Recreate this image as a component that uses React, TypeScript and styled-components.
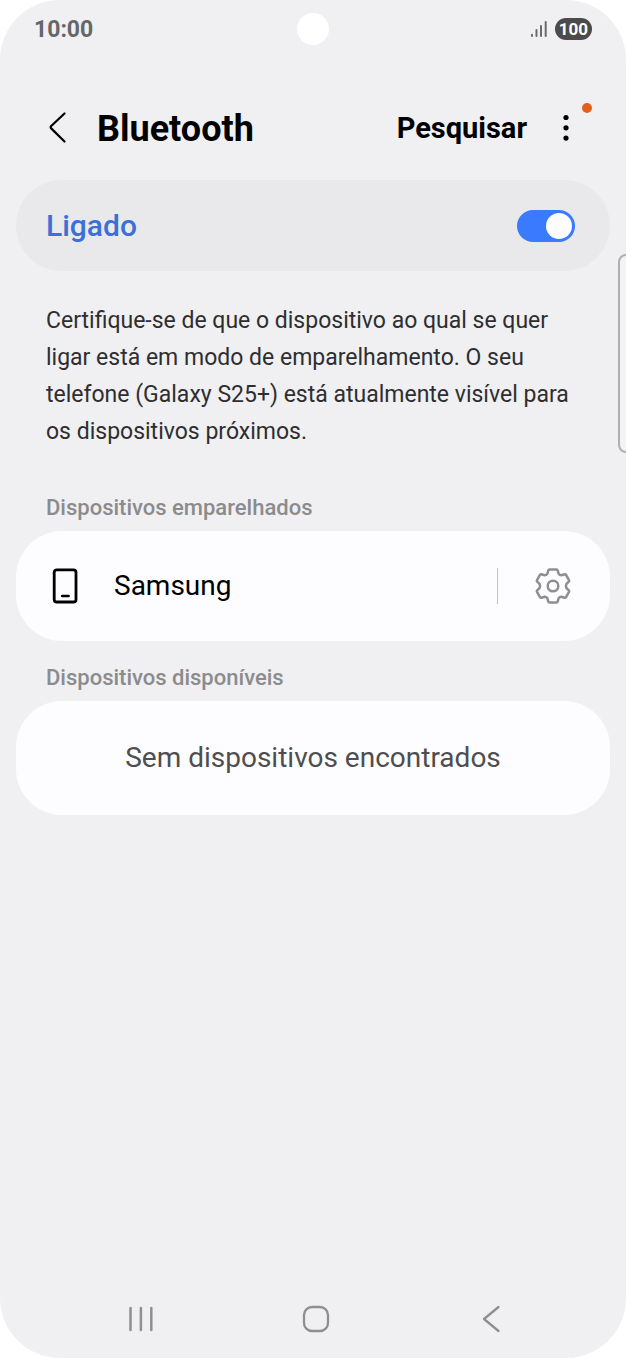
import React from "react";
import styled, { createGlobalStyle } from "styled-components";

const GlobalStyle = createGlobalStyle`
  *, *::before, *::after { box-sizing: border-box; }
  body {
    margin: 0;
    background: #ffffff;
    font-family: Roboto, "Liberation Sans", sans-serif;
  }
  button { font: inherit; color: inherit; background: none; border: 0; padding: 0; cursor: pointer; }
  p, h1, h2 { margin: 0; }
  svg { display: block; flex: none; }
`;

const Screen = styled.div`
  position: relative;
  display: flex;
  flex-direction: column;
  min-height: 100vh;
  overflow: hidden;
  border-radius: 60px;
  background: #f0f0f2;
  color: #000000;
`;

const StatusBar = styled.div`
  display: grid;
  grid-template-columns: 1fr auto 1fr;
  align-items: center;
  height: 58px;
  padding: 0 34px;
`;

const Clock = styled.time`
  padding-top: 2px;
  font-size: 23px;
  line-height: 28px;
  font-weight: 700;
  color: #666668;
`;

const Camera = styled.div`
  width: 32px;
  height: 32px;
  border-radius: 50%;
  background: #ffffff;
`;

const StatusIcons = styled.div`
  display: flex;
  justify-content: flex-end;
  align-items: center;
  gap: 8px;
`;

const Battery = styled.span`
  width: 37px;
  height: 22px;
  border-radius: 11px;
  background: #4b4b4b;
  color: #ffffff;
  font-size: 17px;
  line-height: 22px;
  font-weight: 700;
  text-align: center;
`;

const Header = styled.header`
  display: flex;
  align-items: center;
  height: 80px;
  margin-top: 30px;
  padding: 0 46px 0 44px;
`;

const IconButton = styled.button`
  display: flex;
  align-items: center;
  justify-content: center;
  position: relative;
  flex: none;
  width: 28px;
  height: 48px;
`;

const Title = styled.h1`
  flex: 1;
  padding: 2px 0 0 25px;
  font-size: 36px;
  line-height: 44px;
  font-weight: 700;
`;

const SearchButton = styled.button`
  && {
    margin-right: 25px;
    font-size: 29px;
    line-height: 44px;
    font-weight: 700;
  }
`;

const UpdateDot = styled.span`
  position: absolute;
  top: -1px;
  right: -12px;
  width: 10px;
  height: 10px;
  border-radius: 50%;
  background: #e2601c;
`;

const Content = styled.main`
  display: flex;
  flex-direction: column;
  padding: 12px 16px 0;
`;

const PowerRow = styled.label`
  display: flex;
  align-items: center;
  justify-content: space-between;
  height: 91px;
  padding: 0 35px 0 30px;
  border-radius: 46px;
  background: #e9e9eb;
  color: #3a70d8;
  font-size: 30px;
  line-height: 36px;
  font-weight: 500;
`;

const Switch = styled.input`
  appearance: none;
  display: flex;
  align-items: center;
  justify-content: flex-start;
  width: 58px;
  height: 32px;
  margin: 0;
  padding: 0 3px;
  border-radius: 16px;
  background: #9a9a9e;
  cursor: pointer;

  &::before {
    content: "";
    width: 26px;
    height: 26px;
    border-radius: 50%;
    background: #fdfdff;
  }
  &:checked { justify-content: flex-end; background: #3a7afe; }
`;

const Description = styled.p`
  padding: 31px 29px 0 30px;
  color: #2e2e30;
  font-size: 23px;
  line-height: 37px;
`;

const SectionTitle = styled.h2<{ $gap: number }>`
  margin-top: ${({ $gap }) => $gap}px;
  padding: 0 30px;
  color: #8b8b8d;
  font-size: 22px;
  line-height: 30px;
  font-weight: 500;
`;

const Card = styled.section`
  display: flex;
  align-items: center;
  min-height: 110px;
  margin-top: 8px;
  padding: 0 43px 0 36px;
  border-radius: 46px;
  background: #fdfdff;
`;

const DeviceButton = styled.button`
  && {
    display: flex;
    flex: 1;
    align-items: center;
    gap: 36px;
    font-size: 28px;
    line-height: 36px;
    text-align: left;
  }
`;

const Divider = styled.span`
  width: 1px;
  height: 36px;
  margin-right: 41px;
  background: #c4c4c6;
`;

const EmptyCard = styled(Card)`
  justify-content: center;
  min-height: 114px;
  padding: 0 36px;
  color: #4e4e50;
  font-size: 28px;
  line-height: 36px;
`;

const EdgeHandle = styled.div`
  position: absolute;
  top: 254px;
  right: -8px;
  width: 16px;
  height: 199px;
  border: 2px solid #b0b0b2;
  border-radius: 8px;
  background: #f3f3f5;
`;

const NavBar = styled.nav`
  display: flex;
  height: 78px;
  margin-top: auto;
  padding: 0 48px 0 54px;
`;

const NavButton = styled.button`
  display: flex;
  flex: 1;
  align-items: center;
  justify-content: center;
`;

export default function App() {
  const [on, setOn] = React.useState(true);
  return (
    <>
      <GlobalStyle />
      <Screen>
        <StatusBar>
          <Clock>10:00</Clock>
          <Camera />
          <StatusIcons>
            <svg width="16" height="18" viewBox="0 0 16 18" stroke="#6a6a6c" strokeWidth="2" strokeLinecap="round" aria-hidden="true">
              <path d="M1 14.8V16M5.5 10V16M10 6V16M14.7 2V16" />
            </svg>
            <Battery>100</Battery>
          </StatusIcons>
        </StatusBar>

        <Header>
          <IconButton aria-label="Voltar">
            <svg width="20" height="32" viewBox="0 0 20 32" fill="none" stroke="#000" strokeWidth="2.2" strokeLinecap="round" strokeLinejoin="round">
              <path d="M16.5 1.5L3.2 14Q2 15.2 3.2 16.4L16.5 29.5" />
            </svg>
          </IconButton>
          <Title>Bluetooth</Title>
          <SearchButton>Pesquisar</SearchButton>
          <IconButton aria-label="Mais opções">
            <svg width="6" height="28" viewBox="0 0 6 28" fill="#000">
              <circle cx="3" cy="3.5" r="2.6" />
              <circle cx="3" cy="13.8" r="2.6" />
              <circle cx="3" cy="24.1" r="2.6" />
            </svg>
            <UpdateDot />
          </IconButton>
        </Header>

        <Content>
          <PowerRow>
            Ligado
            <Switch type="checkbox" role="switch" checked={on} onChange={(e) => setOn(e.target.checked)} />
          </PowerRow>
          <Description>
            Certifique-se de que o dispositivo ao qual se quer ligar está em modo de emparelhamento. O seu telefone (Galaxy
            S25+) está atualmente visível para os dispositivos próximos.
          </Description>

          <SectionTitle $gap={43}>Dispositivos emparelhados</SectionTitle>
          <Card>
            <DeviceButton>
              <svg width="26" height="36" viewBox="0 0 26 36" fill="none" stroke="#000" strokeWidth="2.8" strokeLinecap="round" aria-hidden="true">
                <rect x="2.2" y="1.8" width="21.8" height="32.2" rx="2.6" />
                <path d="M10.2 28H16.6" strokeWidth="2.6" />
              </svg>
              Samsung
            </DeviceButton>
            <Divider />
            <IconButton aria-label="Definições do dispositivo">
              <svg width="38" height="38" viewBox="-19 -19 38 38" fill="none" stroke="#8f8f91" strokeWidth="2.5" strokeLinejoin="round">
                <path d="M-3.6 -16.5H3.6Q4.4 -16.5 4.7 -15.6L5.6 -12.2Q6.8 -10.7 8.3 -10.8L11.6 -11.8Q12.4 -12 12.9 -11.3L16.1 -5.7Q16.4 -5 15.8 -4.3L13.4 -2Q12.4 0 13.4 2L15.8 4.3Q16.4 5 16.1 5.7L12.9 11.3Q12.4 12 11.6 11.8L8.3 10.8Q6.8 10.7 5.6 12.2L4.7 15.6Q4.4 16.5 3.6 16.5H-3.6Q-4.4 16.5 -4.7 15.6L-5.6 12.2Q-6.8 10.7 -8.3 10.8L-11.6 11.8Q-12.4 12 -12.9 11.3L-16.1 5.7Q-16.4 5 -15.8 4.3L-13.4 2Q-12.4 0 -13.4 -2L-15.8 -4.3Q-16.4 -5 -16.1 -5.7L-12.9 -11.3Q-12.4 -12 -11.6 -11.8L-8.3 -10.8Q-6.8 -10.7 -5.6 -12.2L-4.7 -15.6Q-4.4 -16.5 -3.6 -16.5Z" />
                <circle r="5.3" />
              </svg>
            </IconButton>
          </Card>

          <SectionTitle $gap={22}>Dispositivos disponíveis</SectionTitle>
          <EmptyCard>
            <p>Sem dispositivos encontrados</p>
          </EmptyCard>
        </Content>

        <EdgeHandle />

        <NavBar>
          <NavButton aria-label="Recentes">
            <svg width="26" height="26" viewBox="0 0 26 26" stroke="#8f8f91" strokeWidth="2.5" strokeLinecap="round">
              <path d="M2.5 2V24M12.9 2V24M23.3 2V24" />
            </svg>
          </NavButton>
          <NavButton aria-label="Início">
            <svg width="28" height="28" viewBox="0 0 28 28" fill="none" stroke="#8f8f91" strokeWidth="2.3">
              <rect x="2" y="2" width="24" height="24" rx="8" />
            </svg>
          </NavButton>
          <NavButton aria-label="Anterior">
            <svg width="20" height="28" viewBox="0 0 20 28" fill="none" stroke="#8f8f91" strokeWidth="2.3" strokeLinecap="round" strokeLinejoin="round">
              <path d="M17.5 2L3 14L17.5 26" />
            </svg>
          </NavButton>
        </NavBar>
      </Screen>
    </>
  );
}
